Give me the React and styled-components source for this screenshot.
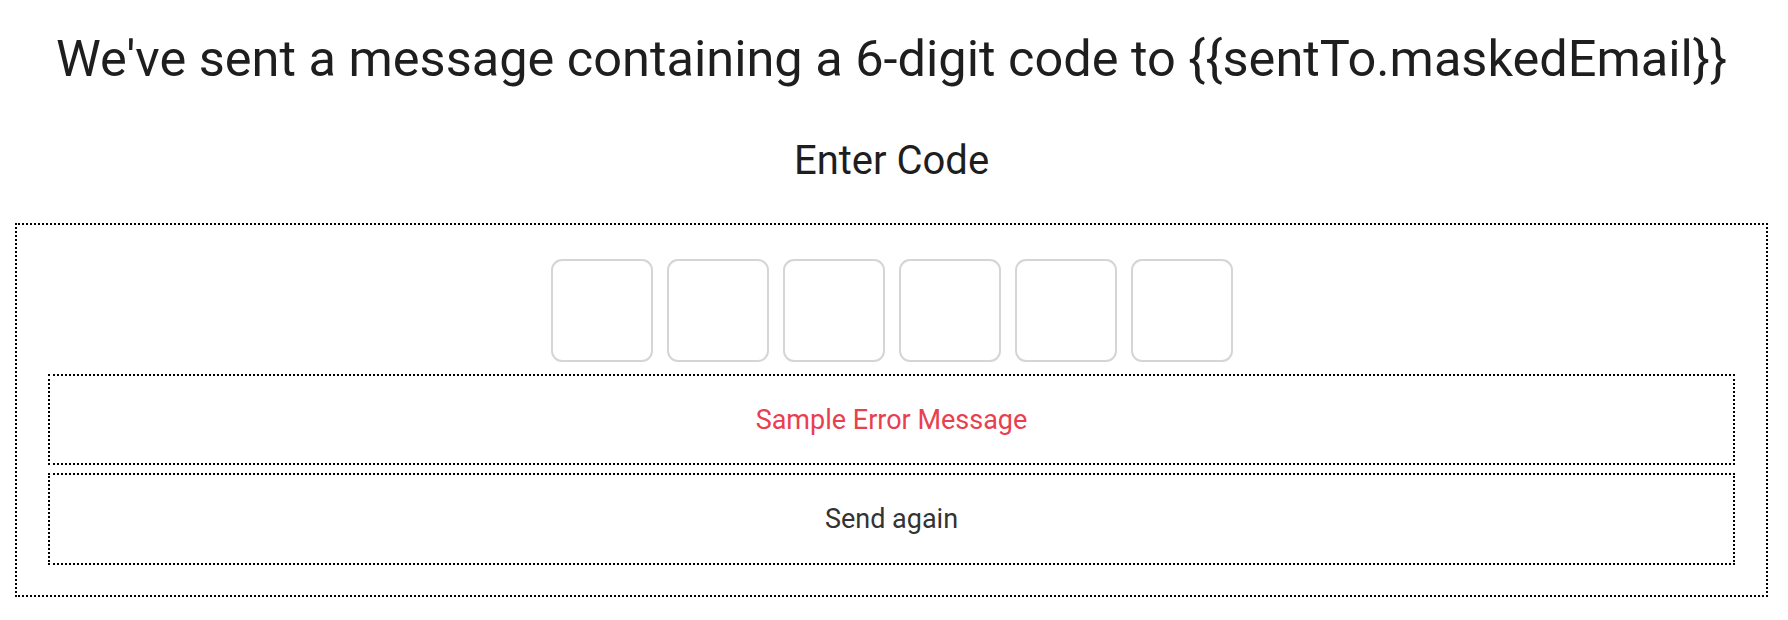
import React from "react";
import styled, { createGlobalStyle } from "styled-components";

const GlobalStyle = createGlobalStyle`
  html, body {
    margin: 0;
    padding: 0;
    background: #ffffff;
  }
  body {
    font-family: Roboto, "Liberation Sans", Arial, sans-serif;
    color: #1c1c1c;
  }
`;

const Page = styled.div`
  display: flex;
  flex-direction: column;
  align-items: stretch;
  padding: 0 20px 0 15px;
`;

const Title = styled.h1`
  margin: 30px 0 0;
  text-align: center;
  font-size: 50.5px;
  line-height: 58px;
  font-weight: 400;
  color: #1e1e1e;
  white-space: nowrap;
`;

const Subtitle = styled.h2`
  margin: 51px 0 0;
  text-align: center;
  font-size: 40px;
  line-height: 44px;
  font-weight: 400;
  color: #1e1e1e;
`;

const Frame = styled.div`
  margin-top: 40px;
  border: 2px dotted #000;
  padding: 34px 31px 30px;
  display: flex;
  flex-direction: column;
`;

const CodeRow = styled.div`
  display: flex;
  justify-content: center;
  gap: 14px;
  margin-bottom: 12px;
`;

const CodeInput = styled.input`
  box-sizing: border-box;
  width: 102px;
  height: 103px;
  border: 2px solid #d3d5d8;
  border-radius: 11px;
  background: #fff;
  outline: none;
  text-align: center;
  font-family: inherit;
  font-size: 40px;
`;

const Slot = styled.div`
  box-sizing: border-box;
  border: 2px dotted #000;
  height: ${(p) => p.$h}px;
  margin-top: ${(p) => p.$gap || 0}px;
  display: flex;
  align-items: center;
  justify-content: center;
  font-size: 27px;
  color: ${(p) => p.$color};
`;

export default function App() {
  return (
    <>
      <GlobalStyle />
      <Page>
        <Title>We've sent a message containing a 6-digit code to {"{{sentTo.maskedEmail}}"}</Title>
        <Subtitle>Enter Code</Subtitle>
        <Frame>
          <CodeRow>
            {[0, 1, 2, 3, 4, 5].map((i) => (
              <CodeInput key={i} aria-label={`Digit ${i + 1}`} maxLength={1} />
            ))}
          </CodeRow>
          <Slot $h={91} $color="#e8404f">Sample Error Message</Slot>
          <Slot $h={92} $gap={8} $color="#333333">Send again</Slot>
        </Frame>
      </Page>
    </>
  );
}
